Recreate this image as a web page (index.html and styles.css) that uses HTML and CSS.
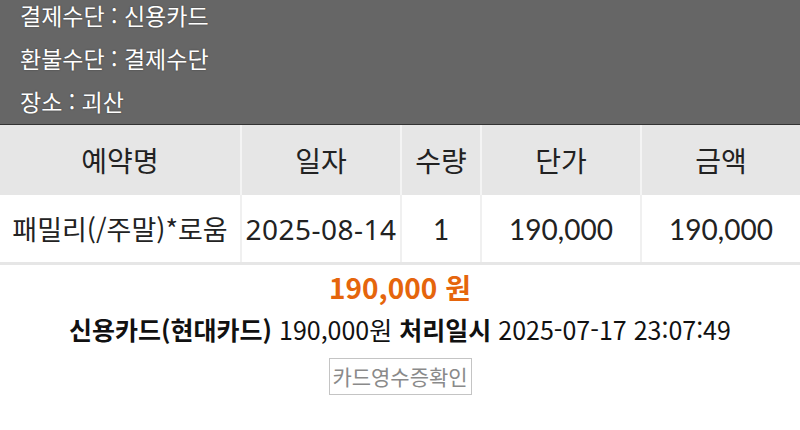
FILE: index.html
```html
<!DOCTYPE html>
<html lang="ko">
<head>
<meta charset="utf-8">
<link rel="stylesheet" href="styles.css">
</head>
<body>
<div class="info">
  <div class="info-line">결제수단 : 신용카드</div>
  <div class="info-line">환불수단 : 결제수단</div>
  <div class="info-line">장소 : 괴산</div>
</div>
<div class="table">
  <div class="row head">
    <div class="cell c1">예약명</div>
    <div class="cell c2">일자</div>
    <div class="cell c3">수량</div>
    <div class="cell c4">단가</div>
    <div class="cell c5">금액</div>
  </div>
  <div class="row body">
    <div class="cell c1 name">패밀리(/주말)*로움</div>
    <div class="cell c2 date">2025-08-14</div>
    <div class="cell c3 num">1</div>
    <div class="cell c4 num">190,000</div>
    <div class="cell c5 num">190,000</div>
  </div>
</div>
<div class="summary">
  <div class="total">190,000 원</div>
  <div class="pay"><b>신용카드(현대카드)</b> 190,000원 <b>처리일시</b> 2025-07-17 23:07:49</div>
  <div class="btn">카드영수증확인</div>
</div>
</body>
</html>
```
FILE: styles.css
```css
html, body {
  margin: 0;
  padding: 0;
  background: #fff;
  font-family: "Noto Sans CJK KR", "Noto Sans", sans-serif;
}
.info {
  background: #666666;
  height: 125px;
  border-bottom: 1px solid #333;
  padding-left: 20px;
  padding-top: 1px;
  box-sizing: border-box;
  color: #fff;
  font-size: 23px;
  display: flex;
  flex-direction: column;
  gap: 15px;
}
.info-line {
  height: 28px;
  line-height: 28px;
  text-shadow: 0 0 2px rgba(0,0,0,0.4);
}
.table {
  border-bottom: 3px solid #e6e6e6;
}
.row {
  display: grid;
  grid-template-columns: 240px 160px 80px 160px 160px;
}
.cell {
  display: flex;
  align-items: center;
  justify-content: center;
  font-size: 28px;
  color: #222;
  border-left: 2px solid #f0f0f0;
  white-space: nowrap;
}
.cell.c1 {
  border-left: none;
}
.head {
  height: 70px;
  background: #e6e6e6;
}
.head .cell {
  border-left-color: #f4f4f4;
}
.body {
  height: 67px;
  background: #fff;
}
.name {
  font-size: 27px;
}
.num {
  font-family: Lato, "Noto Sans CJK KR", sans-serif;
  font-size: 28px;
}
.date {
  font-family: "Noto Sans", Roboto, sans-serif;
  font-size: 28px;
  letter-spacing: 0.5px;
}
.summary {
  display: flex;
  flex-direction: column;
  align-items: center;
}
.total {
  color: #e5650c;
  font-weight: bold;
  font-size: 28px;
  margin-top: 5px;
  line-height: 34px;
}
.pay {
  font-size: 25px;
  color: #111;
  line-height: 34px;
  margin-top: 8px;
}
.pay b {
  font-weight: bold;
}
.btn {
  margin-top: 12px;
  border: 1px solid #c4c4c4;
  color: #8a8a8a;
  font-size: 21px;
  width: 141px;
  height: 35px;
  line-height: 35px;
  text-align: center;
}
```
